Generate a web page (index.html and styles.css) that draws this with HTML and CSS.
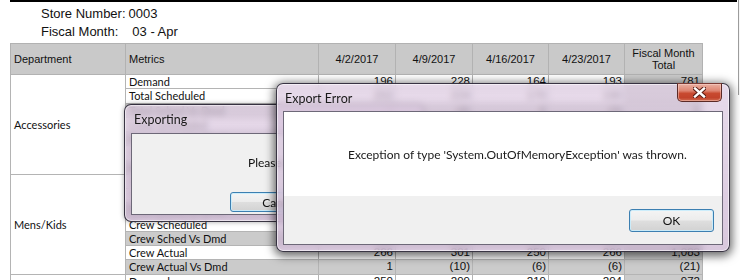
FILE: index.html
```html
<!DOCTYPE html>
<html>
<head>
<meta charset="utf-8">
<title>Report export</title>
<link rel="stylesheet" href="styles.css">
</head>
<body>
<div class="screen">
  <div class="report">
    <div class="info">
      <div class="info-row">Store Number:<span class="v1">0003</span></div>
      <div class="info-row">Fiscal Month:<span class="v2">03 - Apr</span></div>
    </div>
    <table class="grid">
      <colgroup>
        <col class="c-dept"><col class="c-metric"><col class="c-wk"><col class="c-wk"><col class="c-wk2"><col class="c-wk2"><col class="c-tot">
      </colgroup>
      <thead>
        <tr>
          <th class="l">Department</th>
          <th class="l">Metrics</th>
          <th>4/2/2017</th>
          <th>4/9/2017</th>
          <th>4/16/2017</th>
          <th>4/23/2017</th>
          <th class="two">Fiscal Month<br>Total</th>
        </tr>
      </thead>
      <tbody>
        <tr><td class="dept" rowspan="7">Accessories</td><td class="metric">Demand</td><td class="num">196</td><td class="num">228</td><td class="num">164</td><td class="num">193</td><td class="num tot">781</td></tr>
        <tr><td class="metric">Total Scheduled</td><td class="num">202</td><td class="num">224</td><td class="num">170</td><td class="num">190</td><td class="num tot">786</td></tr>
        <tr class="alt"><td class="metric">Total Sched Vs Dmd</td><td class="num">6</td><td class="num">(4)</td><td class="num">6</td><td class="num">(3)</td><td class="num tot">5</td></tr>
        <tr><td class="metric">Crew Scheduled</td><td class="num">180</td><td class="num">205</td><td class="num">150</td><td class="num">172</td><td class="num tot">707</td></tr>
        <tr class="alt"><td class="metric">Crew Sched Vs Dmd</td><td class="num">(16)</td><td class="num">(23)</td><td class="num">(14)</td><td class="num">(21)</td><td class="num tot">(74)</td></tr>
        <tr><td class="metric">Crew Actual</td><td class="num">185</td><td class="num">210</td><td class="num">148</td><td class="num">176</td><td class="num tot">719</td></tr>
        <tr class="alt"><td class="metric">Crew Actual Vs Dmd</td><td class="num">(11)</td><td class="num">(18)</td><td class="num">(16)</td><td class="num">(17)</td><td class="num tot">(62)</td></tr>

        <tr><td class="dept" rowspan="7">Mens/Kids</td><td class="metric">Demand</td><td class="num">265</td><td class="num">311</td><td class="num">256</td><td class="num">272</td><td class="num tot">1,104</td></tr>
        <tr><td class="metric">Total Scheduled</td><td class="num">270</td><td class="num">305</td><td class="num">260</td><td class="num">268</td><td class="num tot">1,103</td></tr>
        <tr class="alt"><td class="metric">Total Sched Vs Dmd</td><td class="num">5</td><td class="num">(6)</td><td class="num">4</td><td class="num">(4)</td><td class="num tot">(1)</td></tr>
        <tr><td class="metric">Crew Scheduled</td><td class="num">262</td><td class="num">298</td><td class="num">251</td><td class="num">263</td><td class="num tot">1,074</td></tr>
        <tr class="alt"><td class="metric">Crew Sched Vs Dmd</td><td class="num">(3)</td><td class="num">(13)</td><td class="num">(5)</td><td class="num">(9)</td><td class="num tot">(30)</td></tr>
        <tr><td class="metric">Crew Actual</td><td class="num">266</td><td class="num">301</td><td class="num">250</td><td class="num">266</td><td class="num tot">1,083</td></tr>
        <tr class="alt"><td class="metric">Crew Actual Vs Dmd</td><td class="num">1</td><td class="num">(10)</td><td class="num">(6)</td><td class="num">(6)</td><td class="num tot">(21)</td></tr>

        <tr><td class="dept" rowspan="7">Womens</td><td class="metric">Demand</td><td class="num">250</td><td class="num">299</td><td class="num">219</td><td class="num">204</td><td class="num tot">972</td></tr>
        <tr><td class="metric">Total Scheduled</td><td class="num">248</td><td class="num">301</td><td class="num">220</td><td class="num">199</td><td class="num tot">968</td></tr>
        <tr class="alt"><td class="metric">Total Sched Vs Dmd</td><td class="num">(2)</td><td class="num">2</td><td class="num">1</td><td class="num">(5)</td><td class="num tot">(4)</td></tr>
      </tbody>
    </table>
  </div>
  <div class="edge"></div>

  <div class="dlg dlg-exporting">
    <div class="dlg-title">Exporting</div>
    <div class="client client-gray">
      <div class="wait-text">Please wait while the report is exported...</div>
      <div class="btn-row-left"><button class="btn btn-cancel">Cancel</button></div>
    </div>
  </div>

  <div class="dlg dlg-error">
    <div class="dlg-title">Export Error</div>
    <button class="close-btn" aria-label="Close">
      <svg width="13" height="11" viewBox="0 0 13 11">
        <path d="M2 1.5 L11 9.5 M11 1.5 L2 9.5" stroke="#5a1d14" stroke-width="4.4" stroke-linecap="square" fill="none"/>
        <path d="M2 1.5 L11 9.5 M11 1.5 L2 9.5" stroke="#ffffff" stroke-width="2.4" stroke-linecap="square" fill="none"/>
      </svg>
    </button>
    <div class="client">
      <div class="msg-area">
        <div class="msg">Exception of type 'System.OutOfMemoryException' was thrown.</div>
      </div>
      <div class="btn-area">
        <button class="btn btn-ok">OK</button>
      </div>
    </div>
  </div>
</div>
</body>
</html>
```

FILE: styles.css
```css
* { box-sizing: border-box; }

html, body {
  margin: 0;
  padding: 0;
  background: #ffffff;
}

body {
  width: 740px;
  height: 280px;
  overflow: hidden;
  font-family: "Liberation Sans", Arial, sans-serif;
  color: #000;
}

.screen {
  position: relative;
  width: 740px;
  height: 280px;
  overflow: hidden;
  display: flex;
  align-items: flex-start;
}

.report {
  margin-left: 10px;
  width: 727px;
  border-top: 2px solid #000;
}

.edge {
  margin-left: 1px;
  width: 2px;
  height: 95px;
  border-left: 1px solid #9c9c9c;
  background: #f6f6f6;
}

/* header info */
.info {
  padding: 3px 0 2px 31px;
  font-size: 13px;
  color: #111;
}
.info-row {
  height: 18px;
  line-height: 18px;
  white-space: nowrap;
}
.v1 { margin-left: 3px; }
.v2 { margin-left: 14px; }

/* grid */
.grid {
  border-collapse: collapse;
  table-layout: fixed;
  width: 692px;
  font-size: 11.5px;
}
.c-dept { width: 115px; }
.c-metric { width: 193px; }
.c-wk { width: 77px; }
.c-wk2 { width: 76px; }
.c-tot { width: 78px; }

.grid th {
  height: 31px;
  background: #c9c9c9;
  font-weight: normal;
  font-size: 11px;
  color: #111;
  border: 1px solid #b2b2b2;
  padding: 0 3px;
  text-align: center;
  vertical-align: middle;
}
.grid th.l { text-align: left; }
.grid th.two { line-height: 12px; }

.grid td {
  box-sizing: content-box;
  height: 13.25px;
  padding: 0 3px;
  line-height: 13px;
  border: 1px solid #b4b4b4;
  white-space: nowrap;
  overflow: hidden;
  background: #ffffff;
  color: #111;
}
.grid td.dept {
  font-family: Lato, "Liberation Sans", sans-serif;
  font-size: 11px;
  vertical-align: middle;
  background: #ffffff;
}
.grid td.metric {
  font-family: Lato, "Liberation Sans", sans-serif;
  font-size: 11px;
}
.grid td.num {
  text-align: right;
  padding-right: 2px;
}
.grid tr.alt td:not(.dept) { background: #cbcbcb; }
.grid td.tot { background: #cbcbcb; }

/* dialogs */
.dlg {
  position: absolute;
  display: flex;
  flex-direction: column;
  padding: 0 6px 6px;
  border: 1px solid rgba(28, 26, 40, 0.85);
  border-radius: 7px;
  background: linear-gradient(180deg, rgba(222, 204, 226, 0.72) 0%, rgba(210, 188, 216, 0.66) 40%, rgba(200, 176, 206, 0.7) 100%);
  backdrop-filter: blur(3px);
  font-family: Lato, "Noto Sans", sans-serif;
  font-size: 12px;
  color: #111;
}

.dlg-exporting {
  left: 124px;
  top: 104px;
  width: 300px;
  height: 118px;
  box-shadow: inset 0 0 0 1px rgba(255, 255, 255, 0.5), 0 0 5px rgba(0, 0, 0, 0.35);
}
.dlg-exporting .dlg-title { height: 28px; padding-top: 0; padding-left: 3px; }

.dlg-error {
  left: 276px;
  top: 83px;
  width: 454px;
  height: 169px;
  box-shadow: inset 0 0 0 1px rgba(255, 255, 255, 0.55), 0 2px 10px 2px rgba(0, 0, 0, 0.6);
}
.dlg-error .dlg-title { height: 27px; }

.dlg-title {
  display: flex;
  align-items: center;
  padding-left: 2px;
  padding-top: 2px;
  font-size: 12.5px;
  color: #1a1a1a;
}

.client {
  flex: 1;
  display: flex;
  flex-direction: column;
  border: 1px solid #6d6878;
  background: #ffffff;
}
.client-gray { background: #f0f0f0; }

.wait-text {
  height: 58px;
  padding-left: 116px;
  padding-top: 21px;
  white-space: nowrap;
}
.btn-row-left {
  padding-left: 98px;
}

.msg-area {
  height: 84px;
  padding-left: 64px;
  padding-top: 35px;
  background: #ffffff;
}
.msg {
  white-space: nowrap;
  font-size: 12px;
  color: #1a1a1a;
}
.btn-area {
  flex: 1;
  display: flex;
  justify-content: flex-end;
  align-items: flex-start;
  padding: 13px 8px 0 0;
  background: #f0f0f0;
}

.btn {
  font-family: Lato, "Noto Sans", sans-serif;
  font-size: 12px;
  color: #111;
  border: 1px solid #3c7fb1;
  border-radius: 3px;
  background: linear-gradient(180deg, #f4f4f4 0%, #ececec 48%, #dedede 52%, #d2d2d2 100%);
  box-shadow: inset 0 0 0 1px rgba(200, 236, 252, 0.9);
  padding: 0;
}
.btn-ok { width: 85px; height: 23px; }
.btn-cancel { width: 100px; height: 20px; }

.close-btn {
  position: absolute;
  top: -1px;
  right: 7px;
  width: 45px;
  height: 19px;
  padding: 0;
  border: 1px solid #5b2a26;
  border-top-color: #7a3a34;
  border-radius: 0 0 5px 5px;
  background: linear-gradient(180deg, #eab0a2 0%, #de8470 40%, #c84a30 55%, #c2432b 80%, #d06a50 100%);
  box-shadow: inset 0 0 0 1px rgba(255, 220, 210, 0.45);
  display: flex;
  align-items: center;
  justify-content: center;
}
.close-btn svg { display: block; }
```
